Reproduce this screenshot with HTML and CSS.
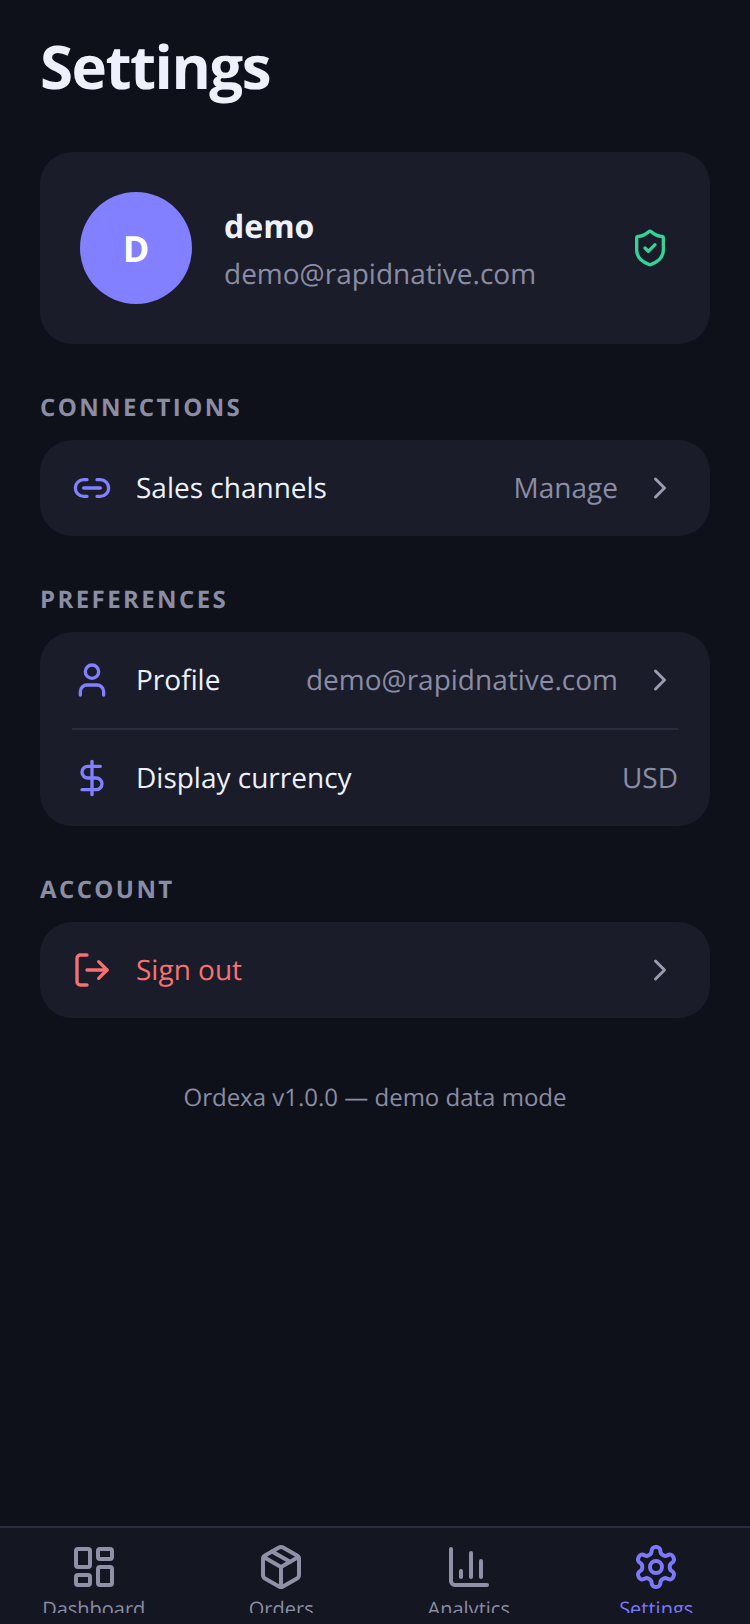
FILE: index.html
```html
<!DOCTYPE html>
<html lang="en">
<head>
<meta charset="utf-8">
<title>Settings</title>
<link rel="stylesheet" href="styles.css">
</head>
<body>
<div class="app">
  <main class="content">
    <h1 class="title">Settings</h1>
    <section class="card profile">
      <div class="avatar">D</div>
      <div class="who">
        <div class="name">demo</div>
        <div class="mail">demo@rapidnative.com</div>
      </div>
      <svg class="shield" viewBox="0 0 24 24" fill="none" stroke="#34d399" stroke-width="2" stroke-linecap="round" stroke-linejoin="round"><path d="M20 13c0 5-3.5 7.5-7.66 8.95a1 1 0 0 1-.67-.01C7.5 20.5 4 18 4 13V6a1 1 0 0 1 1-1c2 0 4.5-1.2 6.24-2.72a1.17 1.17 0 0 1 1.52 0C14.51 3.81 17 5 19 5a1 1 0 0 1 1 1z"/><path d="m9 12 2 2 4-4"/></svg>
    </section>

    <h2 class="label">CONNECTIONS</h2>
    <section class="card">
      <div class="row">
        <svg class="ico" viewBox="0 0 24 24" fill="none" stroke="#8280ff" stroke-width="2" stroke-linecap="round" stroke-linejoin="round"><path d="M9 17H7A5 5 0 0 1 7 7h2"/><path d="M15 7h2a5 5 0 1 1 0 10h-2"/><line x1="7" y1="12" x2="17" y2="12"/></svg>
        <span class="text">Sales channels</span>
        <span class="value">Manage</span>
        <svg class="chev" viewBox="0 0 24 24" fill="none" stroke="#9a9db0" stroke-width="2" stroke-linecap="round" stroke-linejoin="round"><path d="m9 18 6-6-6-6"/></svg>
      </div>
    </section>

    <h2 class="label">PREFERENCES</h2>
    <section class="card">
      <div class="row">
        <svg class="ico" viewBox="0 0 24 24" fill="none" stroke="#8280ff" stroke-width="2" stroke-linecap="round" stroke-linejoin="round"><path d="M19 21v-2a4 4 0 0 0-4-4H9a4 4 0 0 0-4 4v2"/><circle cx="12" cy="7" r="4"/></svg>
        <span class="text">Profile</span>
        <span class="value">demo@rapidnative.com</span>
        <svg class="chev" viewBox="0 0 24 24" fill="none" stroke="#9a9db0" stroke-width="2" stroke-linecap="round" stroke-linejoin="round"><path d="m9 18 6-6-6-6"/></svg>
      </div>
      <div class="sep"></div>
      <div class="row">
        <svg class="ico" viewBox="0 0 24 24" fill="none" stroke="#8280ff" stroke-width="2" stroke-linecap="round" stroke-linejoin="round"><line x1="12" y1="2" x2="12" y2="22"/><path d="M17 5H9.5a3.5 3.5 0 0 0 0 7h5a3.5 3.5 0 0 1 0 7H6"/></svg>
        <span class="text">Display currency</span>
        <span class="value">USD</span>
      </div>
    </section>

    <h2 class="label">ACCOUNT</h2>
    <section class="card">
      <div class="row">
        <svg class="ico" viewBox="0 0 24 24" fill="none" stroke="#f87171" stroke-width="2" stroke-linecap="round" stroke-linejoin="round"><path d="M9 21H5a2 2 0 0 1-2-2V5a2 2 0 0 1 2-2h4"/><polyline points="16 17 21 12 16 7"/><line x1="21" y1="12" x2="9" y2="12"/></svg>
        <span class="text danger">Sign out</span>
        <span class="value"></span>
        <svg class="chev" viewBox="0 0 24 24" fill="none" stroke="#9a9db0" stroke-width="2" stroke-linecap="round" stroke-linejoin="round"><path d="m9 18 6-6-6-6"/></svg>
      </div>
    </section>

    <p class="version">Ordexa v1.0.0 — demo data mode</p>
  </main>

  <nav class="tabs">
    <div class="tab">
      <svg class="tab-ico" viewBox="0 0 24 24" fill="none" stroke="#8f92a6" stroke-width="2" stroke-linecap="round" stroke-linejoin="round"><rect x="3" y="3" width="7" height="9" rx="1"/><rect x="14" y="3" width="7" height="5" rx="1"/><rect x="14" y="12" width="7" height="9" rx="1"/><rect x="3" y="16" width="7" height="5" rx="1"/></svg>
      <div class="tab-clip"><span class="tab-label">Dashboard</span></div>
    </div>
    <div class="tab">
      <svg class="tab-ico" viewBox="0 0 24 24" fill="none" stroke="#8f92a6" stroke-width="2" stroke-linecap="round" stroke-linejoin="round"><path d="M11 21.73a2 2 0 0 0 2 0l7-4A2 2 0 0 0 21 16V8a2 2 0 0 0-1-1.73l-7-4a2 2 0 0 0-2 0l-7 4A2 2 0 0 0 3 8v8a2 2 0 0 0 1 1.73z"/><path d="M12 22V12"/><path d="m3.3 7 8.7 5 8.7-5"/><path d="m7.5 4.27 9 5.15"/></svg>
      <div class="tab-clip"><span class="tab-label">Orders</span></div>
    </div>
    <div class="tab">
      <svg class="tab-ico" viewBox="0 0 24 24" fill="none" stroke="#8f92a6" stroke-width="2" stroke-linecap="round" stroke-linejoin="round"><path d="M3 3v16a2 2 0 0 0 2 2h16"/><path d="M8 17v-3"/><path d="M13 17V5"/><path d="M18 17V9"/></svg>
      <div class="tab-clip"><span class="tab-label">Analytics</span></div>
    </div>
    <div class="tab">
      <svg class="tab-ico" viewBox="0 0 24 24" fill="none" stroke="#7c78f8" stroke-width="2" stroke-linecap="round" stroke-linejoin="round"><path d="M12.22 2h-.44a2 2 0 0 0-2 2v.18a2 2 0 0 1-1 1.73l-.43.25a2 2 0 0 1-2 0l-.15-.08a2 2 0 0 0-2.73.73l-.22.38a2 2 0 0 0 .73 2.73l.15.1a2 2 0 0 1 1 1.72v.51a2 2 0 0 1-1 1.74l-.15.09a2 2 0 0 0-.73 2.73l.22.38a2 2 0 0 0 2.73.73l.15-.08a2 2 0 0 1 2 0l.43.25a2 2 0 0 1 1 1.73V20a2 2 0 0 0 2 2h.44a2 2 0 0 0 2-2v-.18a2 2 0 0 1 1-1.73l.43-.25a2 2 0 0 1 2 0l.15.08a2 2 0 0 0 2.73-.73l.22-.39a2 2 0 0 0-.73-2.73l-.15-.08a2 2 0 0 1-1-1.74v-.5a2 2 0 0 1 1-1.74l.15-.09a2 2 0 0 0 .73-2.73l-.22-.38a2 2 0 0 0-2.73-.73l-.15.08a2 2 0 0 1-2 0l-.43-.25a2 2 0 0 1-1-1.73V4a2 2 0 0 0-2-2z"/><circle cx="12" cy="12" r="3"/></svg>
      <div class="tab-clip"><span class="tab-label active">Settings</span></div>
    </div>
  </nav>
</div>
</body>
</html>
```
FILE: styles.css
```css
* { box-sizing: border-box; }
html, body { margin: 0; padding: 0; }
body { background: #0f111a; font-family: "Open Sans", sans-serif; text-rendering: geometricPrecision; }
.app { width: 750px; height: 1624px; display: flex; flex-direction: column; overflow: hidden; }
.content { flex: 1; padding: 22px 40px 0; min-height: 0; }
.title { margin: 0; font-size: 60px; line-height: 88px; font-weight: 700; letter-spacing: -1.5px; color: #eef1fb; }
.card { background: #1a1c2a; border-radius: 32px; overflow: hidden; }
.profile { margin-top: 42px; padding: 40px; display: flex; align-items: center; gap: 32px; }
.avatar { width: 112px; height: 112px; border-radius: 50%; background: #8280ff; color: #fff; display: flex; align-items: center; justify-content: center; font-size: 36px; font-weight: 700; flex: none; }
.who { flex: 1; min-width: 0; padding-top: 2px; }
.name { font-size: 32px; line-height: 44px; font-weight: 700; color: #eef1fb; }
.mail { font-size: 28px; line-height: 40px; margin-top: 5px; color: #8a8da3; }
.shield { width: 40px; height: 40px; flex: none; }
.label { margin: 49px 0 17px; font-size: 24px; line-height: 30px; font-weight: 700; letter-spacing: 2.4px; color: #8a8da3; }
.row { height: 96px; padding: 0 32px; display: flex; align-items: center; gap: 24px; }
.ico { width: 40px; height: 40px; flex: none; }
.text { font-size: 28px; line-height: 38px; margin-top: -1px; color: #eef1fb; flex: none; }
.danger { color: #f87171; }
.value { flex: 1; text-align: right; font-size: 28px; line-height: 38px; margin-top: -1px; color: #8a8da3; }
.chev { width: 36px; height: 36px; flex: none; }
.sep { height: 2px; margin: 0 32px; background: #2a2d3d; }
.version { margin: 62px 0 0; text-align: center; font-size: 24px; line-height: 36px; color: #8a8da3; }
.tabs { flex: none; height: 98px; background: #141622; border-top: 2px solid #2a2d3d; display: flex; padding-top: 15px; }
.tab { flex: 1; display: flex; flex-direction: column; align-items: center; }
.tab-ico { width: 48px; height: 48px; flex: none; }
.tab-clip { height: 14px; margin-top: 8px; overflow: hidden; line-height: 20px; }
.tab-label { font-size: 20px; color: #8a8da3; }
.active { color: #7c78f8; }
```
